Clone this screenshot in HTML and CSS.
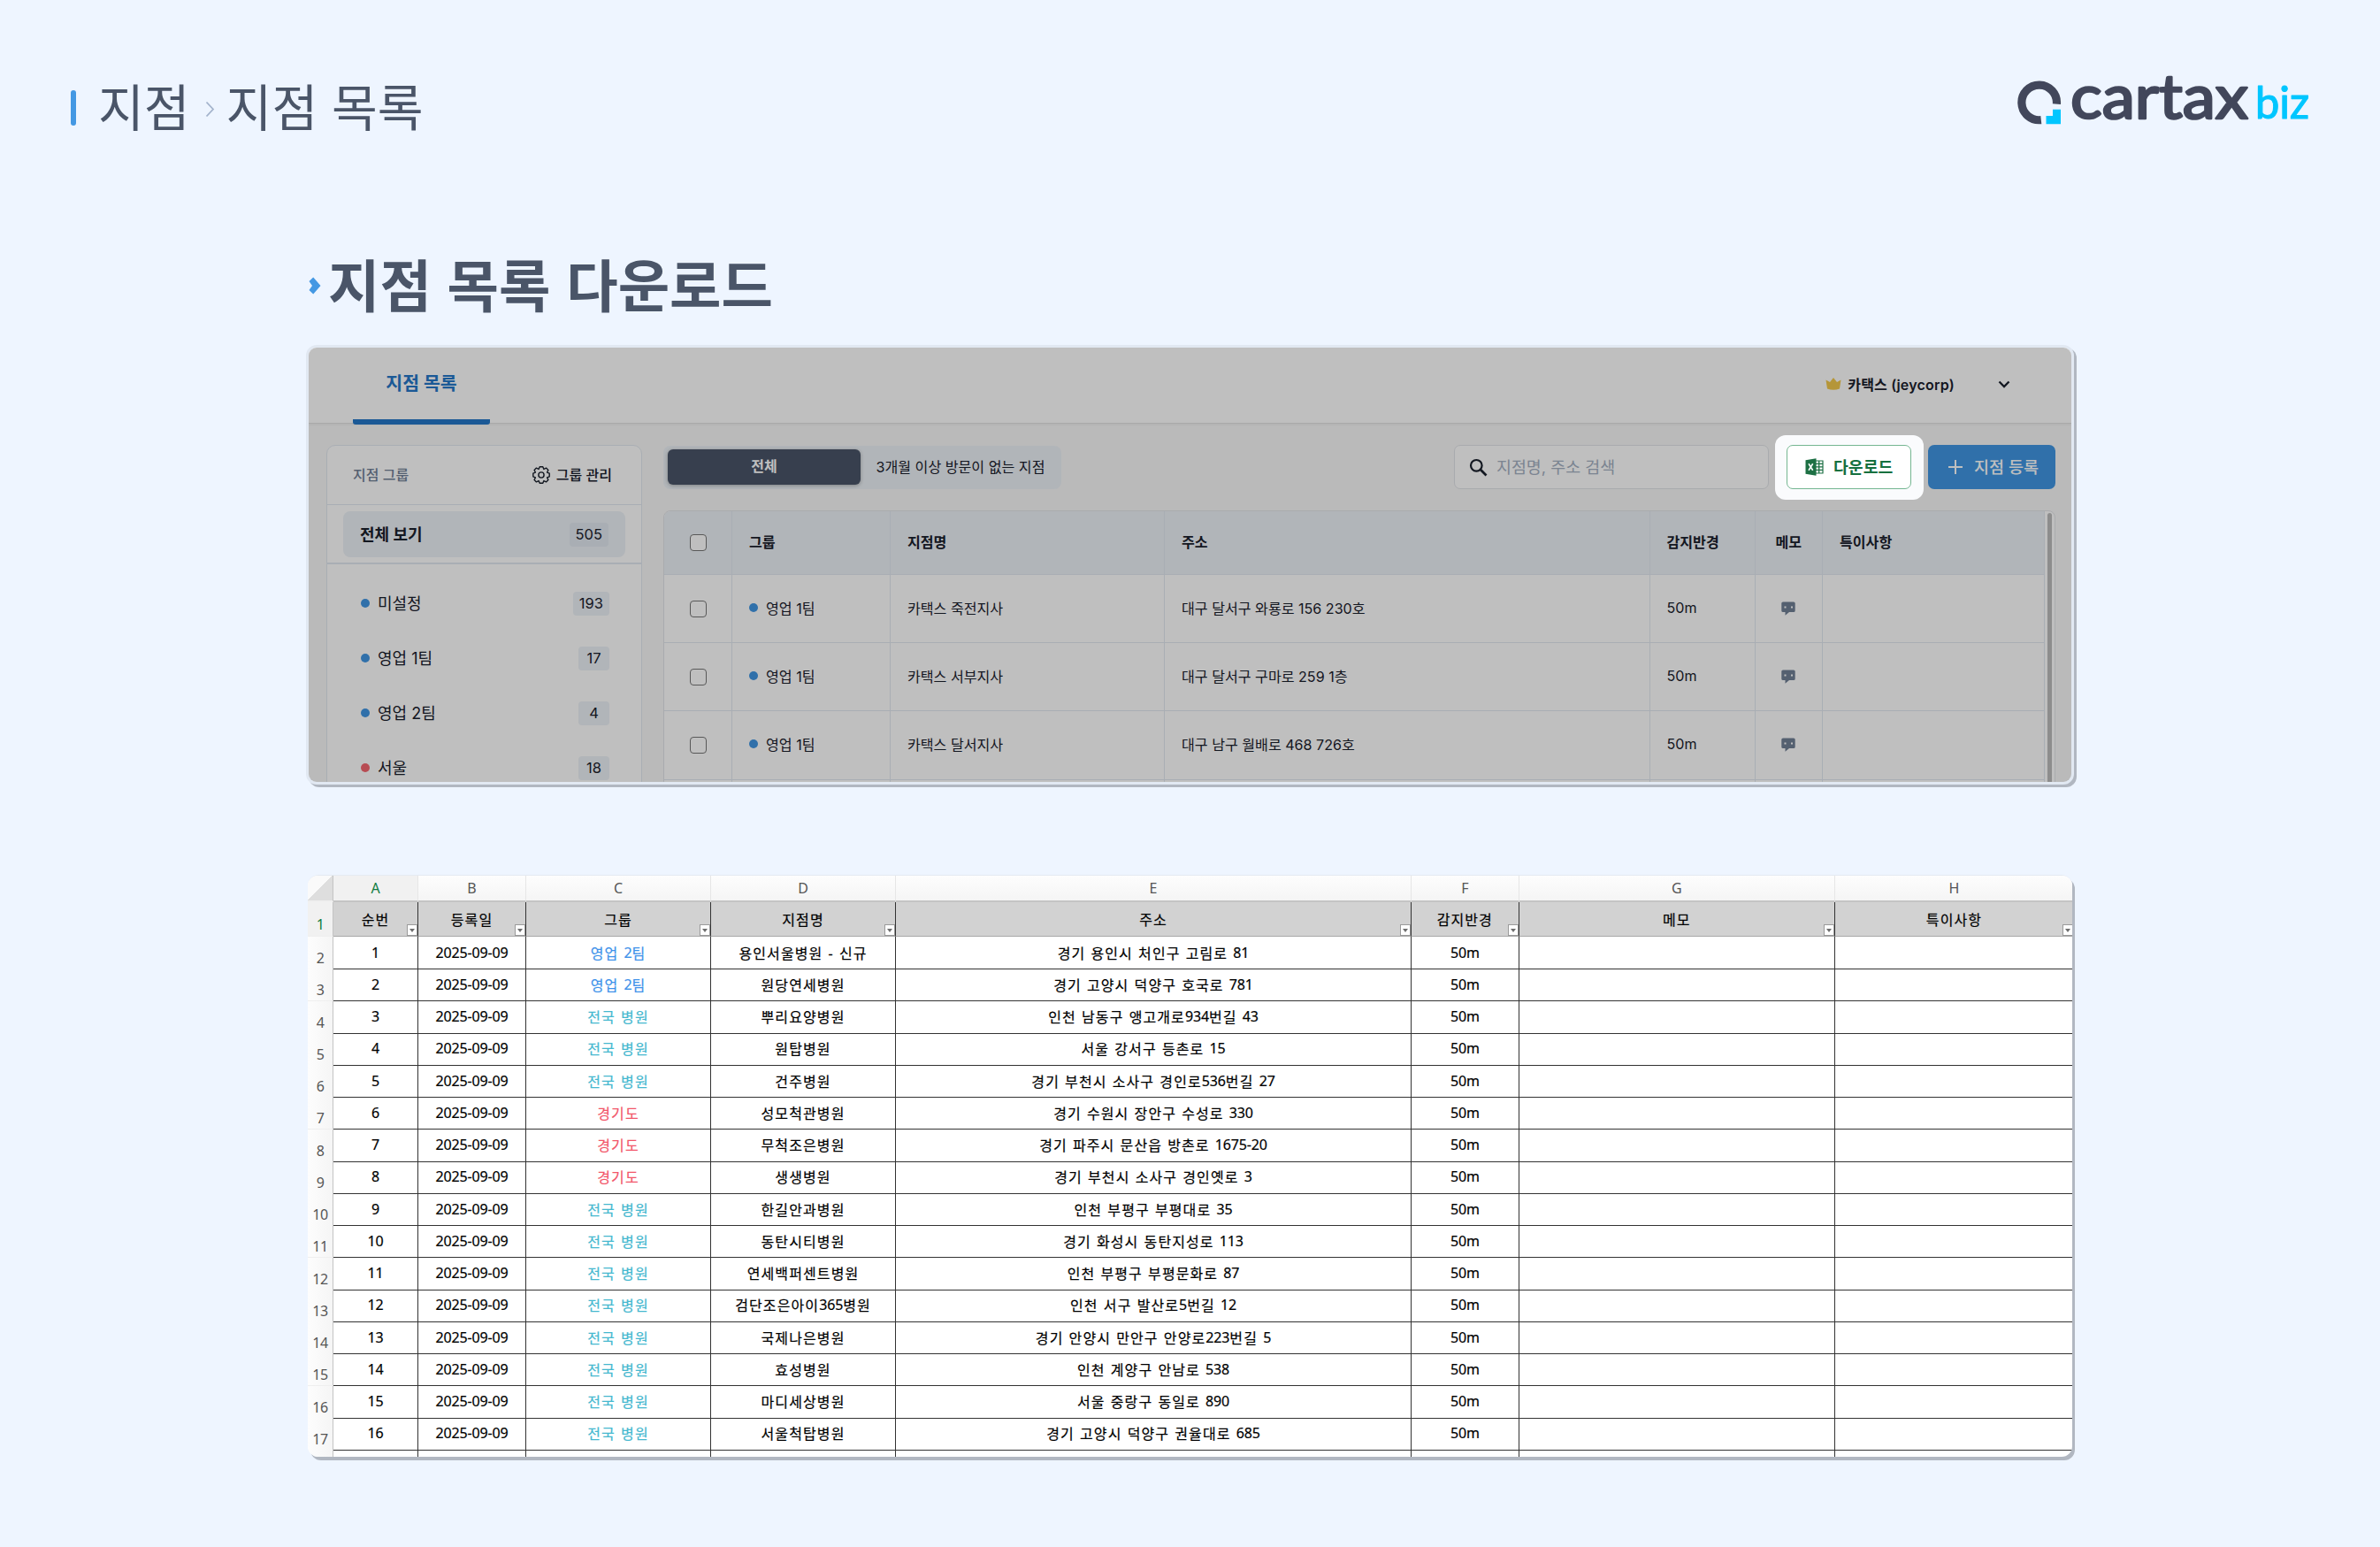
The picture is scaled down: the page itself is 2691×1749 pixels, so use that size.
FILE: index.html
```html
<!DOCTYPE html>
<html lang="ko">
<head>
    <meta charset="UTF-8">
    <meta name="viewport" content="width=device-width, initial-scale=1.0">
    <title>지점 목록 다운로드</title>
    <link rel="stylesheet" href="styles.css">
</head>
<body>
    <header class="page-header">
        <div class="breadcrumb">
            <span class="bar"></span>
            <span class="crumb">지점</span>
            <svg class="crumb-arrow" width="11" height="19" viewBox="0 0 11 19"><path d="M1.5 1.5L9 9.5L1.5 17.5" fill="none" stroke="#a3b3cc" stroke-width="1.8"/></svg>
            <span class="crumb">지점 목록</span>
        </div>
        <svg class="logo" width="332" height="70" viewBox="0 0 332 70">
            <path d="M45.4 39.6A19.8 19.8 0 1 0 27.8 57.6" fill="none" stroke="#42475b" stroke-width="9.2"/>
            <path d="M33.5 53H41V45.7H50V62.3H33.5Z" fill="#00c6ff"/>
            <text class="logo-main" x="61" y="56" textLength="201" lengthAdjust="spacingAndGlyphs">cartax</text>
            <text class="logo-sub" x="270" y="56" textLength="61" lengthAdjust="spacingAndGlyphs">biz</text>
        </svg>
    </header>

    <main>
        <h1 class="title">
            <svg width="14" height="20" viewBox="0 0 14 20"><path d="M5.2 0.5L13.5 10L5.2 19.5L0.5 15L4 10L0.5 5Z" fill="#4498e3"/></svg>
            <span>지점 목록 다운로드</span>
        </h1>

        <section class="app">
            <div class="topbar">
                <div class="tab">지점 목록</div>
                <div class="account">
                    <svg width="18" height="14" viewBox="0 0 18 14"><path d="M0.5 2.5L5 5L9 0L13 5L17.5 2.5L16 12.5Q9 15 2 12.5Z" fill="#f2c94c"/></svg>
                    <span>카택스 (jeycorp)</span>
                    <svg class="caret" width="14" height="9" viewBox="0 0 14 9"><path d="M1.5 1.5L7 7L12.5 1.5" fill="none" stroke="#1a202c" stroke-width="2.3"/></svg>
                </div>
            </div>

            <div class="content">
                <aside class="groups">
                    <div class="groups-head">
                        <span>지점 그룹</span>
                        <span class="manage">
                            <svg width="20" height="20" viewBox="0 0 20 20" fill="none" stroke="#1a202c" stroke-width="1.4" stroke-linejoin="round"><path d="M8.2 0.8H11.8L12.9 3.4L15.5 2.1L17.9 4.5L16.6 7.1L19.2 8.2V11.8L16.6 12.9L17.9 15.5L15.5 17.9L12.9 16.6L11.8 19.2H8.2L7.1 16.6L4.5 17.9L2.1 15.5L3.4 12.9L0.8 11.8V8.2L3.4 7.1L2.1 4.5L4.5 2.1L7.1 3.4Z"/><circle cx="10" cy="10" r="3.1"/></svg>
                            그룹 관리
                        </span>
                    </div>
                    <div class="groups-all">
                        <div class="all-item"><span>전체 보기</span><span class="count">505</span></div>
                    </div>
                    <ul class="group-list">
                        <li><i class="dot"></i><span>미설정</span><span class="count">193</span></li>
                        <li><i class="dot"></i><span>영업 1팀</span><span class="count">17</span></li>
                        <li><i class="dot"></i><span>영업 2팀</span><span class="count">4</span></li>
                        <li><i class="dot red"></i><span>서울</span><span class="count">18</span></li>
                    </ul>
                </aside>

                <div class="branches">
                    <div class="toolbar">
                        <div class="segment">
                            <span class="seg-active">전체</span>
                            <span class="seg">3개월 이상 방문이 없는 지점</span>
                        </div>
                        <div class="search">
                            <svg width="21" height="21" viewBox="0 0 21 21" fill="none" stroke="#1a202c"><circle cx="8.3" cy="8.3" r="6.3" stroke-width="2.2"/><path d="M12.8 12.8L19.5 19.5" stroke-width="2.7"/></svg>
                            <span>지점명, 주소 검색</span>
                        </div>
                        <div class="spotlight">
                            <div class="btn-download">
                                <svg width="21" height="20" viewBox="0 0 21 20"><path d="M11.5 3H20V17H11.5Z" fill="#fff" stroke="#1d7044" stroke-width="1.2"/><path d="M11.5 6.3H20M11.5 9.8H20M11.5 13.3H20M15.7 3V17" stroke="#1d7044" stroke-width="1.3"/><path d="M0.5 2.3L12.5 0.3V19.7L0.5 17.7Z" fill="#1d7044"/><path d="M4 6.3L8.7 13.7M8.7 6.3L4 13.7" stroke="#fff" stroke-width="1.6"/></svg>
                                <span>다운로드</span>
                            </div>
                        </div>
                        <div class="btn-add">
                            <svg width="18" height="18" viewBox="0 0 18 18"><path d="M9 1V17M1 9H17" stroke="#fff" stroke-width="2"/></svg>
                            <span>지점 등록</span>
                        </div>
                    </div>

                    <div class="table-wrap">
                        <div class="table">
                            <div class="tr th">
                                <div class="check"><i></i></div><div>그룹</div><div>지점명</div><div>주소</div><div>감지반경</div><div class="memo">메모</div><div>특이사항</div>
                            </div>
                            <div class="tr">
                                <div class="check"><i></i></div><div><i class="dot"></i>영업 1팀</div><div>카택스 죽전지사</div><div>대구 달서구 와룡로 156 230호</div><div>50m</div>
                                <div class="memo"><svg width="16" height="16" viewBox="0 0 16 16"><path d="M2 0.5H14Q15.7 0.5 15.7 2V10.5Q15.7 12 14 12H9L4.5 15.7V12H2Q0.3 12 0.3 10.5V2Q0.3 0.5 2 0.5Z" fill="#718096"/><path d="M3.5 5.5H5.5V7.5H3.5ZM11 5.5H13V7.5H11Z" fill="#fff"/></svg></div><div></div>
                            </div>
                            <div class="tr">
                                <div class="check"><i></i></div><div><i class="dot"></i>영업 1팀</div><div>카택스 서부지사</div><div>대구 달서구 구마로 259 1층</div><div>50m</div>
                                <div class="memo"><svg width="16" height="16" viewBox="0 0 16 16"><path d="M2 0.5H14Q15.7 0.5 15.7 2V10.5Q15.7 12 14 12H9L4.5 15.7V12H2Q0.3 12 0.3 10.5V2Q0.3 0.5 2 0.5Z" fill="#718096"/><path d="M3.5 5.5H5.5V7.5H3.5ZM11 5.5H13V7.5H11Z" fill="#fff"/></svg></div><div></div>
                            </div>
                            <div class="tr">
                                <div class="check"><i></i></div><div><i class="dot"></i>영업 1팀</div><div>카택스 달서지사</div><div>대구 남구 월배로 468 726호</div><div>50m</div>
                                <div class="memo"><svg width="16" height="16" viewBox="0 0 16 16"><path d="M2 0.5H14Q15.7 0.5 15.7 2V10.5Q15.7 12 14 12H9L4.5 15.7V12H2Q0.3 12 0.3 10.5V2Q0.3 0.5 2 0.5Z" fill="#718096"/><path d="M3.5 5.5H5.5V7.5H3.5ZM11 5.5H13V7.5H11Z" fill="#fff"/></svg></div><div></div>
                            </div>
                            <div class="tr">
                                <div></div><div></div><div></div><div></div><div></div><div></div><div></div>
                            </div>
                        </div>
                        <div class="scrollbar"><span></span></div>
                    </div>
                </div>
            </div>
        </section>

        <section class="sheet" id="sheet"></section>
    </main>

    <script>
        const rows = [
            ['영업 2팀', 'blue', '용인서울병원 - 신규', '경기 용인시 처인구 고림로 81'],
            ['영업 2팀', 'blue', '원당연세병원', '경기 고양시 덕양구 호국로 781'],
            ['전국 병원', 'cyan', '뿌리요양병원', '인천 남동구 앵고개로934번길 43'],
            ['전국 병원', 'cyan', '원탑병원', '서울 강서구 등촌로 15'],
            ['전국 병원', 'cyan', '건주병원', '경기 부천시 소사구 경인로536번길 27'],
            ['경기도', 'pink', '성모척관병원', '경기 수원시 장안구 수성로 330'],
            ['경기도', 'pink', '무척조은병원', '경기 파주시 문산읍 방촌로 1675-20'],
            ['경기도', 'pink', '생생병원', '경기 부천시 소사구 경인옛로 3'],
            ['전국 병원', 'cyan', '한길안과병원', '인천 부평구 부평대로 35'],
            ['전국 병원', 'cyan', '동탄시티병원', '경기 화성시 동탄지성로 113'],
            ['전국 병원', 'cyan', '연세백퍼센트병원', '인천 부평구 부평문화로 87'],
            ['전국 병원', 'cyan', '검단조은아이365병원', '인천 서구 발산로5번길 12'],
            ['전국 병원', 'cyan', '국제나은병원', '경기 안양시 만안구 안양로223번길 5'],
            ['전국 병원', 'cyan', '효성병원', '인천 계양구 안남로 538'],
            ['전국 병원', 'cyan', '마디세상병원', '서울 중랑구 동일로 890'],
            ['전국 병원', 'cyan', '서울척탑병원', '경기 고양시 덕양구 권율대로 685']
        ];
        const heads = ['순번', '등록일', '그룹', '지점명', '주소', '감지반경', '메모', '특이사항'];

        // digits are set tighter than the Korean text around them
        function num(text) {
            return String(text).replace(/[0-9]+(-[0-9]+)*m?/g, '<span class="num">$&</span>');
        }

        function line(cls, label, cells) {
            return `<div class="row ${cls}"><div class="label"><span>${label}</span></div>${cells.join('')}</div>`;
        }

        let html = line('letters', '', 'ABCDEFGH'.split('').map(c => `<div>${c}</div>`));
        html += line('heads', 1, heads.map(h => `<div>${h}<b class="filter"></b></div>`));
        rows.forEach((r, i) => {
            html += line('', i + 2, [
                `<div>${num(i + 1)}</div>`,
                `<div>${num('2025-09-09')}</div>`,
                `<div class="${r[1]}">${num(r[0])}</div>`,
                `<div>${num(r[2])}</div>`,
                `<div>${num(r[3])}</div>`,
                `<div>${num('50m')}</div>`,
                '<div></div>',
                '<div></div>'
            ]);
        });
        html += line('', '', Array(8).fill('<div></div>'));
        document.getElementById('sheet').innerHTML = html;
    </script>
</body>
</html>
```
FILE: styles.css
```css
* {
    box-sizing: border-box;
}
body {
    margin: 0;
    height: 1749px;
    overflow: hidden;
    background: #eef5ff;
    color: #1a202c;
    font-family: Inter, "Noto Sans CJK KR", sans-serif;
}
svg {
    display: block;
    flex: none;
}

/* page header */
.page-header {
    display: flex;
    justify-content: space-between;
    height: 166px;
    padding: 78px 79px 0 80px;
}
.breadcrumb {
    display: flex;
    align-items: center;
    height: 88px;
    font-family: "Noto Sans CJK KR", sans-serif;
    font-size: 56.3px;
    line-height: 82px;
    color: #4a5568;
}
.crumb {
    padding-bottom: 6px;
}
.bar {
    width: 6px;
    height: 40px;
    margin-right: 25px;
    border-radius: 3px;
    background: #4498e3;
}
.crumb-arrow {
    margin: 2px 13px 0 17px;
}
.logo {
    overflow: visible;
}
.logo-main {
    font: 400 70px Lato, sans-serif;
    fill: #42475b;
    stroke: #42475b;
    stroke-width: 2.6;
    stroke-linejoin: round;
}
.logo-sub {
    font: 400 50px Lato, sans-serif;
    fill: #00c6ff;
    stroke: #00c6ff;
    stroke-width: 1.2;
    stroke-linejoin: round;
}

main {
    width: 1999px;
    margin: 109px auto 0;
}
.title {
    display: flex;
    align-items: center;
    gap: 8px;
    height: 96px;
    margin: 0 0 19px;
    padding-left: 3px;
    font: 700 63.5px/89px "Noto Sans CJK KR", sans-serif;
    color: #4a5568;
}
.title span {
    padding-bottom: 7px;
}

/* app panel */
.app {
    height: 497px;
    border: 3px solid #e1e8f2;
    border-radius: 12px;
    background: #f8f8f8;
    box-shadow: 3px 3px 0 #b1b7c1;
    overflow: hidden;
}
.topbar {
    display: flex;
    justify-content: space-between;
    height: 86px;
    padding: 0 69px 0 50px;
    border-bottom: 1px solid #e2e2e2;
    background: #fff;
    box-shadow: 0 1px 3px rgba(0, 0, 0, 0.06);
}
.tab {
    width: 155px;
    height: 87px;
    border-bottom: 6px solid #2577c9;
    border-radius: 3px;
    font-size: 20.5px;
    font-weight: 700;
    line-height: 82px;
    text-align: center;
    color: #2577c9;
}
.account {
    display: flex;
    align-items: center;
    gap: 7px;
    height: 82px;
    font-size: 16px;
    font-weight: 600;
    letter-spacing: 0.2px;
}
.caret {
    margin-left: 42px;
}
.content {
    display: flex;
    gap: 24px;
    padding: 24px 18px 0 20px;
}

.groups {
    flex: none;
    width: 357px;
    height: 420px;
    border: 1px solid #e2e8f0;
    border-radius: 10px;
    background: #fff;
}
.groups-head {
    display: flex;
    justify-content: space-between;
    height: 67px;
    padding: 0 33px 0 29px;
    border-bottom: 1px solid #e2e8f0;
    font-size: 16px;
    font-weight: 500;
    line-height: 66px;
    color: #718096;
}
.manage {
    display: flex;
    align-items: center;
    gap: 7px;
    color: #1a202c;
}
.groups-all {
    height: 67px;
    padding: 7px 18px;
    border-bottom: 2px solid #e2e8f0;
}
.all-item {
    display: flex;
    align-items: center;
    justify-content: space-between;
    height: 52px;
    padding: 0 19px;
    border-radius: 8px;
    background: #edf2f7;
    font-size: 18px;
    font-weight: 700;
}
.count {
    min-width: 35px;
    height: 27px;
    padding: 0 7px;
    border-radius: 4px;
    background: #edf2f7;
    font-size: 16.5px;
    font-weight: 400;
    line-height: 27px;
    text-align: center;
}
.all-item .count {
    background: #e2e8f0;
}
.all-item span:first-child,
.group-list span:not(.count),
.search span,
.btn-download span,
.btn-add span {
    padding-bottom: 2px;
}
.group-list {
    margin: 13px 0 0;
    padding: 0 36px 0 38px;
    list-style: none;
}
.group-list li {
    display: flex;
    align-items: center;
    height: 62px;
    font-size: 18px;
}
.group-list .count {
    margin-left: auto;
}
.dot {
    width: 10px;
    height: 10px;
    margin-right: 9px;
    border-radius: 50%;
    background: #4096e3;
}
.dot.red {
    background: #f5666f;
}

.branches {
    flex: 1;
}
.toolbar {
    display: flex;
    align-items: center;
    height: 50px;
}
.segment {
    display: flex;
    align-items: center;
    width: 450px;
    height: 49px;
    padding: 0 5px;
    border-radius: 8px;
    background: #edf2f7;
    font-size: 16px;
}
.seg-active {
    width: 218px;
    height: 40px;
    border-radius: 6px;
    background: #4a5568;
    box-shadow: 0 1px 4px rgba(0, 0, 0, 0.3);
    color: #fff;
    font-weight: 700;
    line-height: 39px;
    text-align: center;
}
.seg {
    flex: 1;
    padding: 0 0 2px 4px;
    font-size: 16.1px;
    text-align: center;
}
.search {
    display: flex;
    align-items: center;
    gap: 10px;
    width: 356px;
    height: 50px;
    margin-left: auto;
    padding-left: 16px;
    border: 1px solid #e2e4e8;
    border-radius: 7px;
    background: #fff;
    font-size: 18.4px;
    color: #a5b0c2;
}
/* dims everything in the panel around the download button */
.spotlight {
    position: relative;
    z-index: 1;
    width: 168px;
    height: 73px;
    margin: -12px 5px -12px 7px;
    padding: 11px 14px 12px 13px;
    border-radius: 12px;
    background: #fafbfd;
    box-shadow: 0 0 0 2400px rgba(0, 0, 0, 0.25);
}
.btn-download,
.btn-add {
    display: flex;
    align-items: center;
    height: 50px;
    border-radius: 7px;
    font-size: 18.3px;
}
.btn-download {
    gap: 11px;
    padding-left: 20px;
    border: 1px solid #74b691;
    background: #fff;
    font-weight: 600;
    color: #15703f;
}
.btn-add {
    gap: 12px;
    width: 144px;
    padding-left: 22px;
    background: #4096e3;
    font-size: 18.5px;
    font-weight: 500;
    color: #fff;
}

.table-wrap {
    display: flex;
    height: 340px;
    margin-top: 24px;
    border: 1px solid #e2e4e8;
    border-radius: 8px 8px 0 0;
    background: #fff;
    overflow: hidden;
}
.table {
    width: 1561px;
}
.tr {
    display: grid;
    grid-template-columns: 77px 179px 310px 548.5px 119px 76.5px 251px;
    height: 77.2px;
    border-bottom: 1px solid #e2e8f0;
    font-size: 16.1px;
}
.tr > div {
    display: flex;
    align-items: center;
    padding: 0 0 2px 19px;
    border-right: 1px solid #e2e8f0;
}
.tr > .check,
.tr > .memo {
    justify-content: center;
    padding: 0;
}
.th > div,
.th > .memo {
    padding-bottom: 3px;
}
.check i {
    width: 19px;
    height: 19px;
    border: 1.5px solid #767676;
    border-radius: 4px;
    background: #fff;
}
.th {
    height: 72px;
    background: #edf2f7;
    font-weight: 600;
}
.scrollbar {
    flex: 1;
    padding: 2px 3px 0;
}
.scrollbar span {
    display: block;
    width: 5px;
    height: 100%;
    border-radius: 3px;
    background: #bdbdbd;
}

/* spreadsheet */
.sheet {
    width: 1995px;
    height: 658px;
    margin: 102px 0 0 2px;
    border-top: 1px solid #e4eaf2;
    border-radius: 12px;
    background: #fff;
    box-shadow: 3px 4px 0 #b1b7c1;
    color: #000;
    font-family: "Noto Sans", "Noto Sans CJK KR", sans-serif;
    font-size: 16px;
    overflow: hidden;
}
.row {
    display: grid;
    grid-template-columns: 29px 96px 122px 209px 209px 583px 121.6px 357.4px 270px;
    height: 36.28px;
}
.row > div {
    position: relative;
    display: flex;
    align-items: center;
    justify-content: center;
    padding-bottom: 1px;
    border-right: 1px solid #333;
    border-bottom: 1px solid #333;
    letter-spacing: 1.1px;
    word-spacing: 0.9px;
    white-space: pre;
    -webkit-text-stroke: 0.2px;
}
.row > .label {
    border-right-color: #c4c4c4;
    border-bottom-color: #efefef;
    background: linear-gradient(90deg, #fdfdfd, #f5f5f5);
    letter-spacing: -0.5px;
    color: #555;
    -webkit-text-stroke: 0;
}
.label span {
    padding-top: 13px;
}
.num {
    letter-spacing: -0.15px;
}
.row.letters {
    height: 30px;
}
.letters > div {
    padding: 0;
    border-right-color: #e6e6e6;
    border-bottom: 2px solid #c4c4c4;
    background: linear-gradient(#fdfdfd, #f5f5f5);
    color: #555;
    letter-spacing: 0;
    -webkit-text-stroke: 0;
}
.letters > div:nth-child(2) {
    background: #f1f1f1;
    color: #107c41;
}
.letters > .label {
    background: linear-gradient(to bottom right, #fafafa 50%, #dedede 50%);
}
.row.heads {
    height: 39px;
}
.heads > div {
    border-bottom: 1px solid #a9a9a9;
    background: #d2d2d2;
}
.heads > .label {
    background: #f1f1f1;
    color: #107c41;
}
.filter {
    position: absolute;
    right: 0;
    bottom: 0;
    width: 12px;
    height: 13px;
    border: 1px solid #9a9a9a;
    background: #fff;
}
.filter::after {
    content: "";
    position: absolute;
    left: 2px;
    top: 4px;
    border: 3px solid transparent;
    border-top: 4px solid #6e6e6e;
    border-bottom: 0;
}
.blue {
    color: #3e92ea;
}
.cyan {
    color: #45b8cf;
}
.pink {
    color: #f2566a;
}
```
